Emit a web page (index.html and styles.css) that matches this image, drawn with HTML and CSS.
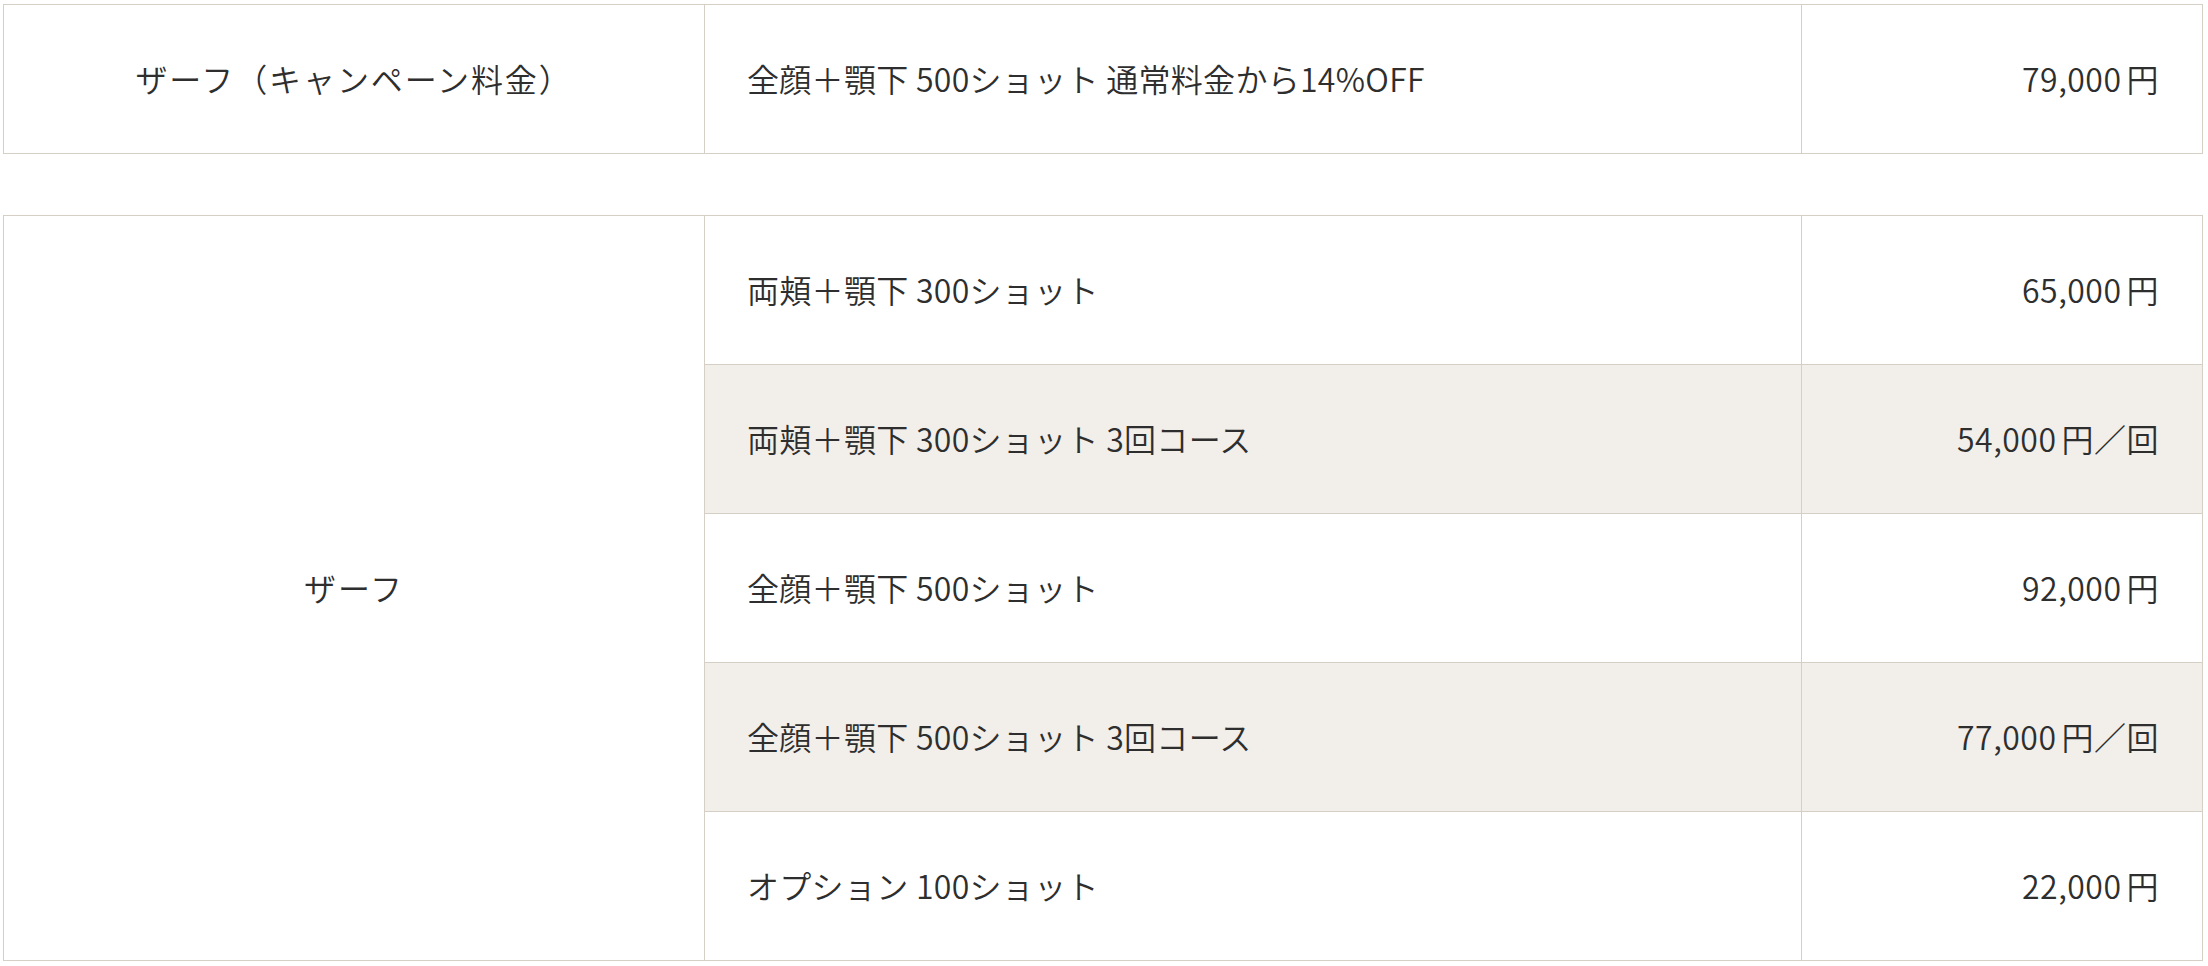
FILE: index.html
```html
<!DOCTYPE html>
<html lang="ja">
<head>
<meta charset="utf-8">
<title>料金表</title>
<link rel="stylesheet" href="styles.css">
</head>
<body>
<div class="page">
  <table class="price-table">
    <colgroup><col class="c-name"><col class="c-desc"><col class="c-price"></colgroup>
    <tr>
      <td class="name">ザーフ（キャンペーン料金）</td>
      <td class="desc">全顔＋顎下 500ショット 通常料金から14%OFF</td>
      <td class="price">79,000<span class="yen">円</span></td>
    </tr>
  </table>
  <table class="price-table">
    <colgroup><col class="c-name"><col class="c-desc"><col class="c-price"></colgroup>
    <tr>
      <td class="name" rowspan="5">ザーフ</td>
      <td class="desc">両頬＋顎下 300ショット</td>
      <td class="price">65,000<span class="yen">円</span></td>
    </tr>
    <tr class="alt">
      <td class="desc">両頬＋顎下 300ショット 3回コース</td>
      <td class="price">54,000<span class="yen">円／回</span></td>
    </tr>
    <tr>
      <td class="desc">全顔＋顎下 500ショット</td>
      <td class="price">92,000<span class="yen">円</span></td>
    </tr>
    <tr class="alt">
      <td class="desc">全顔＋顎下 500ショット 3回コース</td>
      <td class="price">77,000<span class="yen">円／回</span></td>
    </tr>
    <tr>
      <td class="desc">オプション 100ショット</td>
      <td class="price">22,000<span class="yen">円</span></td>
    </tr>
  </table>
</div>
</body>
</html>
```
FILE: styles.css
```css
html, body {
  margin: 0;
  padding: 0;
  background: #ffffff;
}

.page {
  padding: 4px 6px 0 3px;
  display: flex;
  flex-direction: column;
  gap: 61px;
  font-family: "Noto Sans CJK JP", "Noto Sans", sans-serif;
  font-weight: 350;
  font-size: 32px;
  letter-spacing: 0.5px;
  color: #2e2e2e;
}

.price-table {
  width: 2199px;
  border-collapse: collapse;
  table-layout: fixed;
}

.c-name { width: 701px; }
.c-desc { width: 1097px; }
.c-price { width: 401px; }

.price-table td {
  border: 1px solid #d6cfc6;
  height: 146px;
  padding: 0 42px 2px;
  vertical-align: middle;
  line-height: 1.4;
  white-space: nowrap;
}

.price-table td.name {
  text-align: center;
  background: #ffffff;
  letter-spacing: 1.9px;
}

.price-table td.desc {
  text-align: left;
  letter-spacing: 0.3px;
}

.price-table td.price {
  text-align: right;
  padding-right: 43px;
}

.yen {
  margin-left: 5px;
}

.price-table tr.alt td {
  background: #f2efea;
}
```
